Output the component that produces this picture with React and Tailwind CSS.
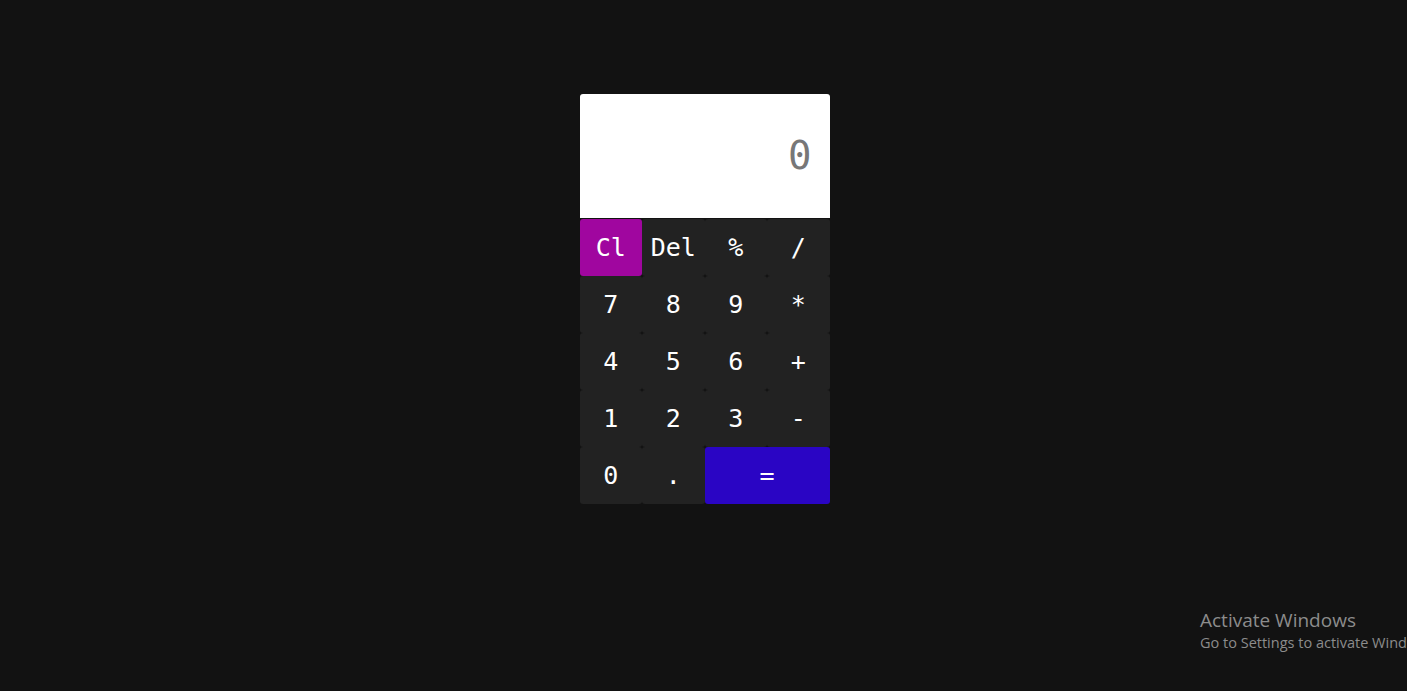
import React from 'react';

const keys = [
  { label: 'Cl', className: 'bg-[#a0069f]' },
  { label: 'Del' },
  { label: '%' },
  { label: '/' },
  { label: '7' },
  { label: '8' },
  { label: '9' },
  { label: '*' },
  { label: '4' },
  { label: '5' },
  { label: '6' },
  { label: '+' },
  { label: '1' },
  { label: '2' },
  { label: '3' },
  { label: '-' },
  { label: '0' },
  { label: '.' },
  { label: '=', className: 'bg-[#2a05c4] col-span-2 text-[22px]' },
];

export default function App() {
  return (
    <div className="relative min-h-[691px] w-full bg-[#121212] overflow-hidden">
      <div className="flex justify-center pt-[94px] pl-[2px]">
        <div className="w-[250px]">
          <div className="h-[124px] bg-white rounded-t-[3px] flex items-center justify-end pr-[18px]">
            <span className="font-['DejaVu_Sans_Mono',monospace] text-[39px] text-[#777777]">0</span>
          </div>
          <div className="grid grid-cols-4 mt-[1px]">
            {keys.map((k) => (
              <button
                key={k.label}
                className={`h-[57px] rounded-[3px] font-['DejaVu_Sans_Mono',monospace] text-[25px] text-white flex items-center justify-center ${k.className || 'bg-[#222222]'}`}
              >
                {k.label}
              </button>
            ))}
          </div>
        </div>
      </div>
      <div className="absolute left-[1200px] top-[608px] font-['Open_Sans',sans-serif] text-[#8c8c8c] whitespace-nowrap">
        <p className="text-[19px] leading-[24px]">Activate Windows</p>
        <p className="text-[14.5px] leading-[22px]">Go to Settings to activate Windows.</p>
      </div>
    </div>
  );
}
